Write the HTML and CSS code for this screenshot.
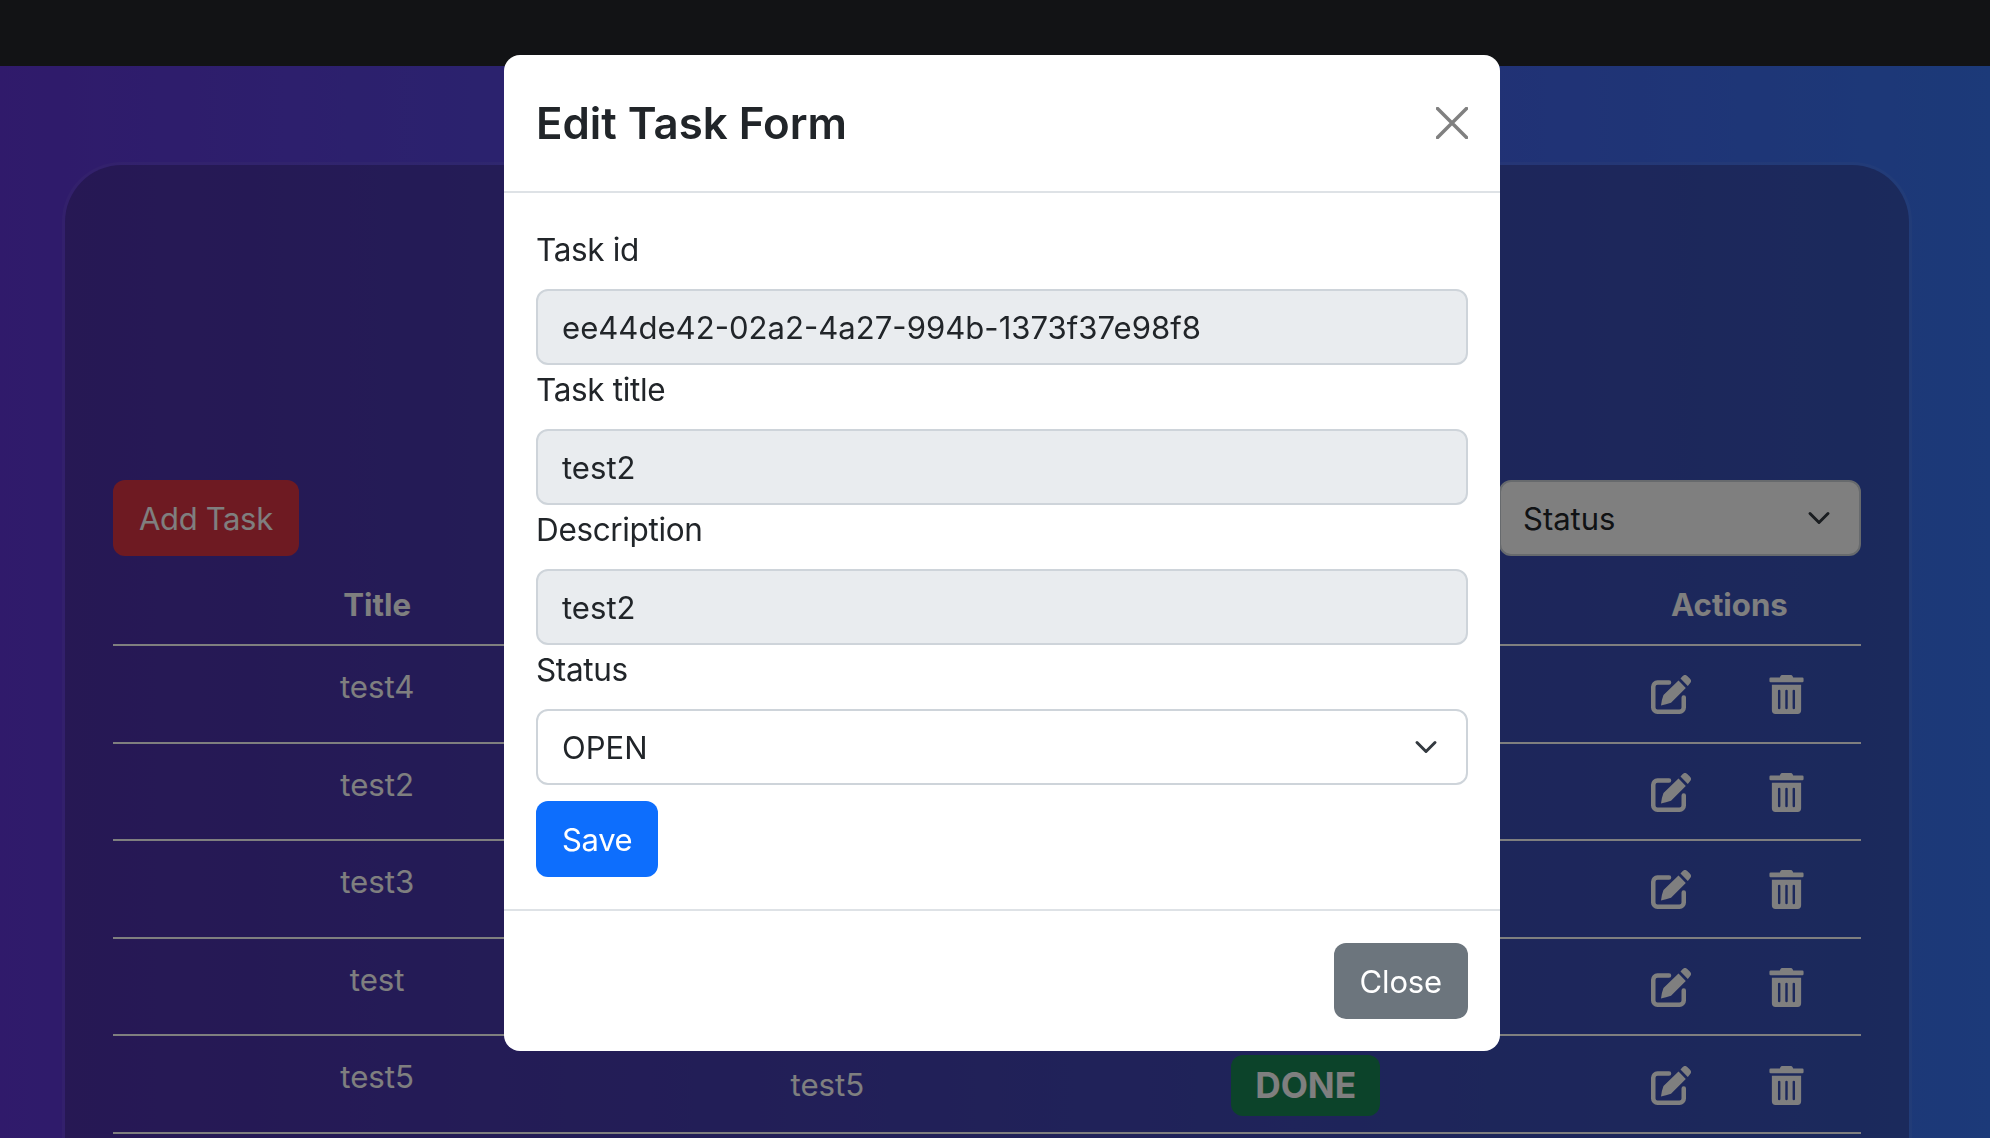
FILE: index.html
```html
<!DOCTYPE html>
<html lang="en">
<head>
<meta charset="utf-8">
<title>Edit Task Form</title>
<link rel="stylesheet" href="styles.css">
</head>
<body>
<nav class="navbar"></nav>
<main class="page">
  <section class="card">
    <div class="toolbar">
      <button class="btn btn-danger" type="button">Add Task</button>
      <select class="form-select filter"><option>Status</option></select>
    </div>
    <table class="tasks">
      <colgroup><col class="c1"><col class="c2"><col class="c3"><col class="c4"></colgroup>
      <thead><tr><th>Title</th><th></th><th></th><th>Actions</th></tr></thead>
      <tbody>
        <tr><td class="top">test4</td><td></td><td></td><td><div class="actions"><svg class="ic-edit" viewBox="0 0 40 39"><use href="#edit"/></svg><svg class="ic-trash" viewBox="0 0 448 512"><use href="#trash"/></svg></div></td></tr>
        <tr><td class="top">test2</td><td></td><td></td><td><div class="actions"><svg class="ic-edit" viewBox="0 0 40 39"><use href="#edit"/></svg><svg class="ic-trash" viewBox="0 0 448 512"><use href="#trash"/></svg></div></td></tr>
        <tr><td class="top">test3</td><td></td><td></td><td><div class="actions"><svg class="ic-edit" viewBox="0 0 40 39"><use href="#edit"/></svg><svg class="ic-trash" viewBox="0 0 448 512"><use href="#trash"/></svg></div></td></tr>
        <tr><td class="top">test</td><td></td><td></td><td><div class="actions"><svg class="ic-edit" viewBox="0 0 40 39"><use href="#edit"/></svg><svg class="ic-trash" viewBox="0 0 448 512"><use href="#trash"/></svg></div></td></tr>
        <tr><td class="top">test5</td><td>test5</td><td><span class="badge">DONE</span></td><td><div class="actions"><svg class="ic-edit" viewBox="0 0 40 39"><use href="#edit"/></svg><svg class="ic-trash" viewBox="0 0 448 512"><use href="#trash"/></svg></div></td></tr>
      </tbody>
    </table>
  </section>
</main>

<div class="backdrop"></div>
<div class="modal">
  <header class="modal-header">
    <h5 class="modal-title">Edit Task Form</h5>
    <svg class="close" viewBox="0 0 32 32"><path d="M1.5 1.5 30.500 30.500M30.500 1.500 1.500 30.500"/></svg>
  </header>
  <form class="modal-body">
    <label class="label">Task id</label>
    <input class="form-control" disabled value="ee44de42-02a2-4a27-994b-1373f37e98f8">
    <label class="label">Task title</label>
    <input class="form-control" disabled value="test2">
    <label class="label">Description</label>
    <input class="form-control" disabled value="test2">
    <label class="label">Status</label>
    <select class="form-select"><option>OPEN</option></select>
    <button class="btn btn-primary" type="button">Save</button>
  </form>
  <footer class="modal-footer">
    <button class="btn btn-secondary" type="button">Close</button>
  </footer>
</div>

<svg class="defs" aria-hidden="true">
  <defs>
    <g id="edit">
      <path d="M18 7.500H6.500A4.250 4.250 0 0 0 2.250 11.750V32.500A4.250 4.250 0 0 0 6.500 36.750H28.500A4.250 4.250 0 0 0 32.750 32.500V22.500" class="ic-stroke"/>
      <path d="M27.500 5.500 34.800 13 20 27.700Q15 29.500 10 30.500 10.500 25 12.500 20ZM29.500 3.500 31.500 1.200A3.500 3.500 0 0 1 36.500 1.200L38.800 3.500A3.500 3.500 0 0 1 38.800 8.500L36.800 11Z"/>
    </g>
    <path id="trash" d="M32 464a48 48 0 0 0 48 48h288a48 48 0 0 0 48-48V128H32zm272-256a16 16 0 0 1 32 0v224a16 16 0 0 1-32 0zm-96 0a16 16 0 0 1 32 0v224a16 16 0 0 1-32 0zm-96 0a16 16 0 0 1 32 0v224a16 16 0 0 1-32 0zM432 32H312l-9.400-18.700A24 24 0 0 0 281.100 0H166.800a23.720 23.720 0 0 0-21.400 13.300L136 32H16A16 16 0 0 0 0 48v32a16 16 0 0 0 16 16h416a16 16 0 0 0 16-16V48a16 16 0 0 0-16-16z"/>
  </defs>
</svg>
</body>
</html>
```
FILE: styles.css
```css
* { box-sizing: border-box; }
html, body { margin: 0; height: 100%; overflow: hidden; }
body {
  display: flex;
  flex-direction: column;
  font-family: Inter, "Liberation Sans", sans-serif;
  font-size: 31px;
  line-height: 48px;
  color: #212529;
  background: #212529;
}
.navbar { height: 66px; flex: none; background: #24272b; }
.page {
  flex: 1;
  min-height: 0;
  padding: 96px 78px 0 62px;
  background: linear-gradient(90deg, #6035d6, #3874f2);
}
.card {
  height: 1100px;
  padding: 315px 48px 0;
  border: 3px solid rgba(255, 255, 255, .05);
  background-clip: padding-box;
  border-radius: 60px;
  background-color: rgba(50, 36, 95, .38);
}
.toolbar { display: flex; justify-content: space-between; margin-bottom: 8px; }
.btn {
  height: 76px;
  padding: 0 26px;
  border: 0;
  border-radius: 12px;
  font: inherit;
  letter-spacing: -.35px;
  line-height: 78px;
  color: #fff;
}
.btn-danger { background: #dc3545; }
.btn-primary { background: #0d6efd; margin-top: 16px; display: block; }
.btn-secondary { background: #6c757d; letter-spacing: -.15px; }
.form-select {
  display: block;
  appearance: none;
  width: 100%;
  height: 76px;
  padding: 2px 96px 0 24px;
  border: 2px solid #ced4da;
  border-radius: 12px;
  font: inherit;
  color: #212529;
  background: #fff url("data:image/svg+xml,%3csvg xmlns='http://www.w3.org/2000/svg' viewBox='0 0 16 16'%3e%3cpath fill='none' stroke='%23343a40' stroke-linecap='round' stroke-linejoin='round' stroke-width='2' d='m2 5 6 6 6-6'/%3e%3c/svg%3e") no-repeat right 24px center / 32px 24px;
}
.filter { width: 362px; padding-left: 22px; }
.tasks { width: 100%; border-collapse: collapse; table-layout: fixed; color: #fff; font-size: 31.200px; }
.c1 { width: 528px; }
.c2 { width: 372px; }
.c3 { width: 584px; }
.c4 { width: 263px; }
.tasks th, .tasks td { text-align: center; border-bottom: 2px solid #fff; padding: 16px; }
.tasks th { font-weight: 700; height: 81px; padding: 17px 16px 15px; vertical-align: middle; }
.tasks td { height: 97.600px; padding-top: 18px; vertical-align: middle; }
.tasks td.top { padding-top: 17px; vertical-align: top; }
.actions { display: flex; justify-content: center; align-items: center; gap: 78px; padding-right: 4px; }
.ic-edit { width: 40px; height: 39px; fill: #fff; }
.ic-trash { width: 35px; height: 39px; fill: #fff; }
.ic-stroke { fill: none; stroke: #fff; stroke-width: 4.500; stroke-linecap: round; }
.badge {
  display: inline-block;
  height: 61px;
  padding: 0 24px;
  border-radius: 12px;
  font-size: 35.300px;
  font-weight: 700;
  line-height: 61px;
  color: #fff;
  background: #198754;
}
.backdrop { position: fixed; inset: 0; background: rgba(0, 0, 0, .5); }
.modal {
  position: fixed;
  top: 55px;
  left: 504px;
  width: 996px;
  height: 996px;
  border-radius: 16px;
  background: #fff;
}
.modal-header {
  display: flex;
  justify-content: space-between;
  align-items: center;
  height: 138px;
  padding: 0 32px;
  border-bottom: 2px solid #dee2e6;
}
.modal-title { margin: 0; padding-top: 2px; font-size: 43.800px; font-weight: 600; line-height: 60px; }
.close { width: 32px; height: 32px; fill: none; stroke: #808080; stroke-width: 3.500; stroke-linecap: round; }
.modal-body { padding: 32px; }
.label { display: block; margin-bottom: 14px; font-size: 31.500px; line-height: 50px; letter-spacing: -.35px; }
.form-control {
  display: block;
  width: 100%;
  height: 76px;
  padding: 2px 24px 0;
  border: 2px solid #ced4da;
  border-radius: 12px;
  font: inherit;
  font-size: 31.100px;
  color: #212529;
  background: #e9ecef;
  opacity: 1;
}
.modal-footer {
  display: flex;
  justify-content: flex-end;
  padding: 32px;
  border-top: 2px solid #dee2e6;
}
.defs { position: absolute; width: 0; height: 0; }
```
